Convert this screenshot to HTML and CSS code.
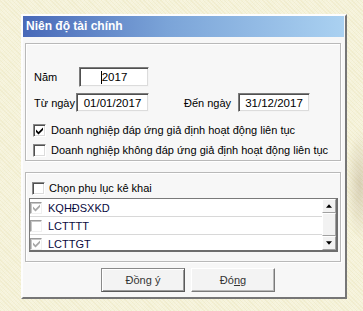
FILE: index.html
```html
<!DOCTYPE html>
<html lang="vi">
<head>
<meta charset="utf-8">
<title>Niên độ tài chính</title>
<link rel="stylesheet" href="styles.css">
</head>
<body>
<div class="dialog">
  <div class="titlebar">Niên độ tài chính</div>
  <div class="dlg-body">
    <div class="group g1">
      <div class="row r1">
        <span class="lbl lbl-nam">Năm</span>
        <div class="input in-nam"><span class="caret"></span>2017</div>
      </div>
      <div class="row r2">
        <span class="lbl lbl-tu">Từ ngày</span>
        <div class="input in-tu">01/01/2017</div>
        <span class="lbl lbl-den">Đến ngày</span>
        <div class="input in-den">31/12/2017</div>
      </div>
      <div class="chk-row first">
        <span class="cb">
          <svg viewBox="0 0 9 9" width="9" height="9"><path d="M1 3.5 L3.5 6 L8 1.5 L8 4 L3.5 8.5 L1 6 Z" fill="#000"/></svg>
        </span>
        <span class="chk-text">Doanh nghiệp đáp ứng giả định hoạt động liên tục</span>
      </div>
      <div class="chk-row">
        <span class="cb"></span>
        <span class="chk-text">Doanh nghiệp không đáp ứng giả định hoạt động liên tục</span>
      </div>
    </div>

    <div class="group g2">
      <div class="chk-row phu-luc">
        <span class="cb"></span>
        <span class="chk-text">Chọn phụ lục kê khai</span>
      </div>
      <div class="listbox">
        <div class="items">
          <div class="item">
            <span class="cb dis">
              <svg viewBox="0 0 9 9" width="9" height="9"><path d="M1 3.5 L3.5 6 L8 1.5 L8 4 L3.5 8.5 L1 6 Z" fill="#a8a8a8"/></svg>
            </span>
            <span class="item-text">KQHĐSXKD</span>
          </div>
          <div class="item">
            <span class="cb dis"></span>
            <span class="item-text">LCTTTT</span>
          </div>
          <div class="item">
            <span class="cb dis">
              <svg viewBox="0 0 9 9" width="9" height="9"><path d="M1 3.5 L3.5 6 L8 1.5 L8 4 L3.5 8.5 L1 6 Z" fill="#a8a8a8"/></svg>
            </span>
            <span class="item-text">LCTTGT</span>
          </div>
        </div>
        <div class="scrollbar">
          <div class="sb-btn up"><svg viewBox="0 0 7 4" width="7" height="4"><path d="M3.5 0 L7 4 L0 4 Z" fill="#000"/></svg></div>
          <div class="sb-thumb"></div>
          <div class="sb-btn down"><svg viewBox="0 0 7 4" width="7" height="4"><path d="M0 0 L7 0 L3.5 4 Z" fill="#000"/></svg></div>
        </div>
      </div>
    </div>

    <div class="buttons">
      <button class="btn default">Đồng ý</button>
      <button class="btn">Đó<u>n</u>g</button>
    </div>
  </div>
</div>
</body>
</html>
```

FILE: styles.css
```css
html, body {
  margin: 0;
  padding: 0;
}
body {
  width: 363px;
  height: 311px;
  overflow: hidden;
  font-family: "Liberation Sans", Arial, sans-serif;
  font-size: 11px;
  color: #000;
  background-color: #f7f4df;
  background-image:
    radial-gradient(ellipse 14px 55px at 360px 185px, rgba(150,130,100,0.3), rgba(150,130,100,0) 100%),
    repeating-linear-gradient(45deg, rgba(215,200,130,0.14) 0 1px, rgba(0,0,0,0) 1px 3px),
    repeating-linear-gradient(-45deg, rgba(240,240,210,0.4) 0 1px, rgba(0,0,0,0) 1px 2px);
}

.dialog {
  margin: 14px 0 0 21px;
  width: 321px;
  height: 281px;
  padding-right: 1px;
  border-style: solid;
  border-width: 2px;
  border-color: #fdfdfd #767676 #767676 #fdfdfd;
  background: #f7f7f7;
  box-sizing: content-box;
}

.titlebar {
  height: 21px;
  line-height: 21px;
  padding-left: 3px;
  color: #fff;
  font-weight: bold;
  font-size: 12px;
  background: linear-gradient(to right, #4869b8 0%, #7ba4d8 45%, #aad1f1 100%);
  white-space: nowrap;
}

.dlg-body {
  padding: 6px 3px 0 2px;
}

.group {
  width: 316px;
  box-sizing: border-box;
  border: 1px solid #b9b9b9;
  box-shadow: inset 1px 1px 0 #ffffff, 1px 1px 0 #ffffff;
}
.g1 {
  height: 118px;
  padding: 23px 0 0 8px;
}
.g2 {
  height: 90px;
  margin-top: 11px;
  padding: 5px 0 0 3px;
}

.row {
  display: flex;
  align-items: center;
}
.r1 { height: 20px; }
.r2 { height: 19px; margin-top: 6px; }

.lbl { white-space: nowrap; }
.lbl-nam { width: 45px; }
.lbl-tu { width: 42px; }
.lbl-den { width: 54px; margin-left: 35px; }

.input {
  box-sizing: border-box;
  height: 100%;
  background: #fff;
  border-style: solid;
  border-width: 1px;
  border-color: #7c7c7c #f4f4f4 #f4f4f4 #7c7c7c;
  box-shadow: inset 1px 1px 0 #505050, inset -1px -1px 0 #dcdcdc;
  display: flex;
  align-items: center;
  justify-content: center;
  font-size: 11.5px;
  white-space: nowrap;
}
.in-nam { width: 70px; }
.in-tu { width: 73px; }
.in-den { width: 72px; }

.caret {
  display: inline-block;
  width: 1px;
  height: 13px;
  background: #000;
}

.chk-row {
  display: flex;
  align-items: center;
  height: 20px;
}
.g1 .chk-row { margin-left: -1px; }
.g1 .chk-row.first { margin-top: 8px; }

.cb {
  box-sizing: border-box;
  width: 13px;
  height: 13px;
  flex: none;
  background: #fff;
  border-style: solid;
  border-width: 1px;
  border-color: #8a8a8a #ffffff #ffffff #8a8a8a;
  box-shadow: inset 1px 1px 0 #505050, inset -1px -1px 0 #dcdcdc;
  display: flex;
  align-items: center;
  justify-content: center;
}
.cb svg { display: block; }

.chk-text {
  margin-left: 5px;
  white-space: nowrap;
}

.phu-luc .cb { margin-left: 3px; }
.phu-luc .chk-text { margin-left: 4px; }

.listbox {
  width: 309px;
  height: 54px;
  box-sizing: border-box;
  border-style: solid;
  border-width: 1px 2px 2px 1px;
  border-color: #7a7a7a #6e6e6e #6e6e6e #7a7a7a;
  background: #fff;
  display: flex;
}

.items {
  flex: 1;
}
.item {
  height: 17px;
  display: flex;
  align-items: center;
  border-bottom: 1px solid #d8d8d8;
}
.item:last-child { border-bottom: none; }
.item .cb.dis {
  border-color: #9a9a9a #f0f0f0 #f0f0f0 #9a9a9a;
  box-shadow: inset 1px 1px 0 #c8c8c8;
  width: 12px;
  height: 12px;
}
.item-text {
  margin-left: 6px;
  color: #0a0a40;
  white-space: nowrap;
}

.scrollbar {
  width: 14px;
  display: flex;
  flex-direction: column;
  background: #f0f0f0;
}
.sb-btn, .sb-thumb {
  box-sizing: border-box;
  background: #f2f2f2;
  border-style: solid;
  border-width: 1px;
  border-color: #ffffff #a0a0a0 #a0a0a0 #ffffff;
}
.sb-btn {
  height: 14px;
  display: flex;
  align-items: center;
  justify-content: center;
}
.sb-btn svg { display: block; width: 6px; }
.sb-thumb {
  flex: 1;
}

.buttons {
  display: flex;
  gap: 6px;
  margin-top: 6px;
  padding-left: 76px;
}
.btn {
  font-family: "Liberation Sans", Arial, sans-serif;
  font-size: 11px;
  font-weight: normal;
  color: #333;
  width: 84px;
  height: 24px;
  padding: 0;
  background: #f3f3f3;
  border-style: solid;
  border-width: 1px;
  border-color: #ffffff #7a7a7a #7a7a7a #ffffff;
  box-shadow: inset -1px -1px 0 #b8b8b8;
}
.btn.default {
  border-color: #8a8a8a #5a5a5a #5a5a5a #8a8a8a;
  box-shadow: inset 1px 1px 0 #ffffff, inset -1px -1px 0 #9a9a9a;
}
.btn u { text-decoration: underline; }
```
